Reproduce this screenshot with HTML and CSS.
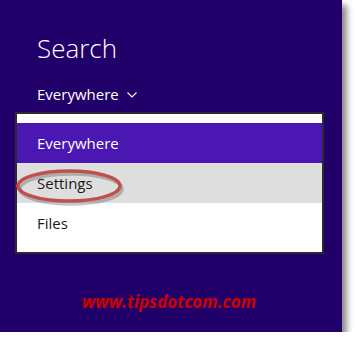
FILE: index.html
```html
<!DOCTYPE html>
<html lang="en">
<head>
  <meta charset="UTF-8">
  <title>Search</title>
  <link rel="stylesheet" href="styles.css">
</head>
<body>
  <div class="panel">
    <h1 class="title">Search</h1>
    <div class="scope">
      Everywhere
      <svg class="chevron" width="10" height="6" viewBox="0 0 10 6">
        <path d="M0.5 0.5 L5 5 L9.5 0.5" fill="none" stroke="#ffffff" stroke-width="1.1"/>
      </svg>
    </div>
    <div class="menu">
      <div class="item selected">Everywhere</div>
      <div class="item hover">Settings</div>
      <div class="item">Files</div>
      <svg class="circle" width="112" height="40" viewBox="0 0 112 40">
        <ellipse cx="55" cy="19" rx="51" ry="15" fill="none" stroke="rgba(0,0,0,0.22)" stroke-width="3.5" transform="translate(2 3)"/>
        <ellipse cx="55" cy="19" rx="51" ry="15" fill="none" stroke="#c0504d" stroke-width="3.5"/>
      </svg>
    </div>
    <div class="credit">www.tipsdotcom.com</div>
  </div>
</body>
</html>
```

FILE: styles.css
```css
body {
  margin: 0;
  background-color: #ffffff;
  font-family: "Segoe UI", "Open Sans", Arial, sans-serif;
}

.panel {
  width: 342px;
  height: 332px;
  background-color: #21006a;
  box-shadow: 5px 5px 6px rgba(0, 0, 0, 0.45);
  padding-top: 30px;
  box-sizing: border-box;
}

.title {
  margin: 0 0 0 37px;
  font-size: 26px;
  font-weight: 300;
  line-height: 36px;
  color: #ffffff;
}

.scope {
  display: flex;
  align-items: center;
  gap: 8px;
  margin: 18px 0 0 37px;
  font-size: 15px;
  line-height: 20px;
  color: #ffffff;
}

.chevron {
  margin-top: 2px;
}

.menu {
  position: relative;
  width: 305px;
  margin: 8px 0 0 15px;
  padding: 9px 0;
  border: 2px solid #2b2b2b;
  background-color: #ffffff;
}

.item {
  height: 40px;
  padding-left: 20px;
  font-size: 15px;
  line-height: 40px;
  color: #1a1a1a;
}

.item.selected {
  background-color: #4a17b2;
  color: #ffffff;
}

.item.hover {
  background-color: #dedede;
}

.circle {
  position: absolute;
  left: -3px;
  top: 53px;
}

.credit {
  margin-top: 36px;
  padding-right: 4px;
  text-align: center;
  font-family: "Open Sans", Arial, sans-serif;
  font-size: 17px;
  font-weight: bold;
  font-style: italic;
  color: #cc0000;
}
```
